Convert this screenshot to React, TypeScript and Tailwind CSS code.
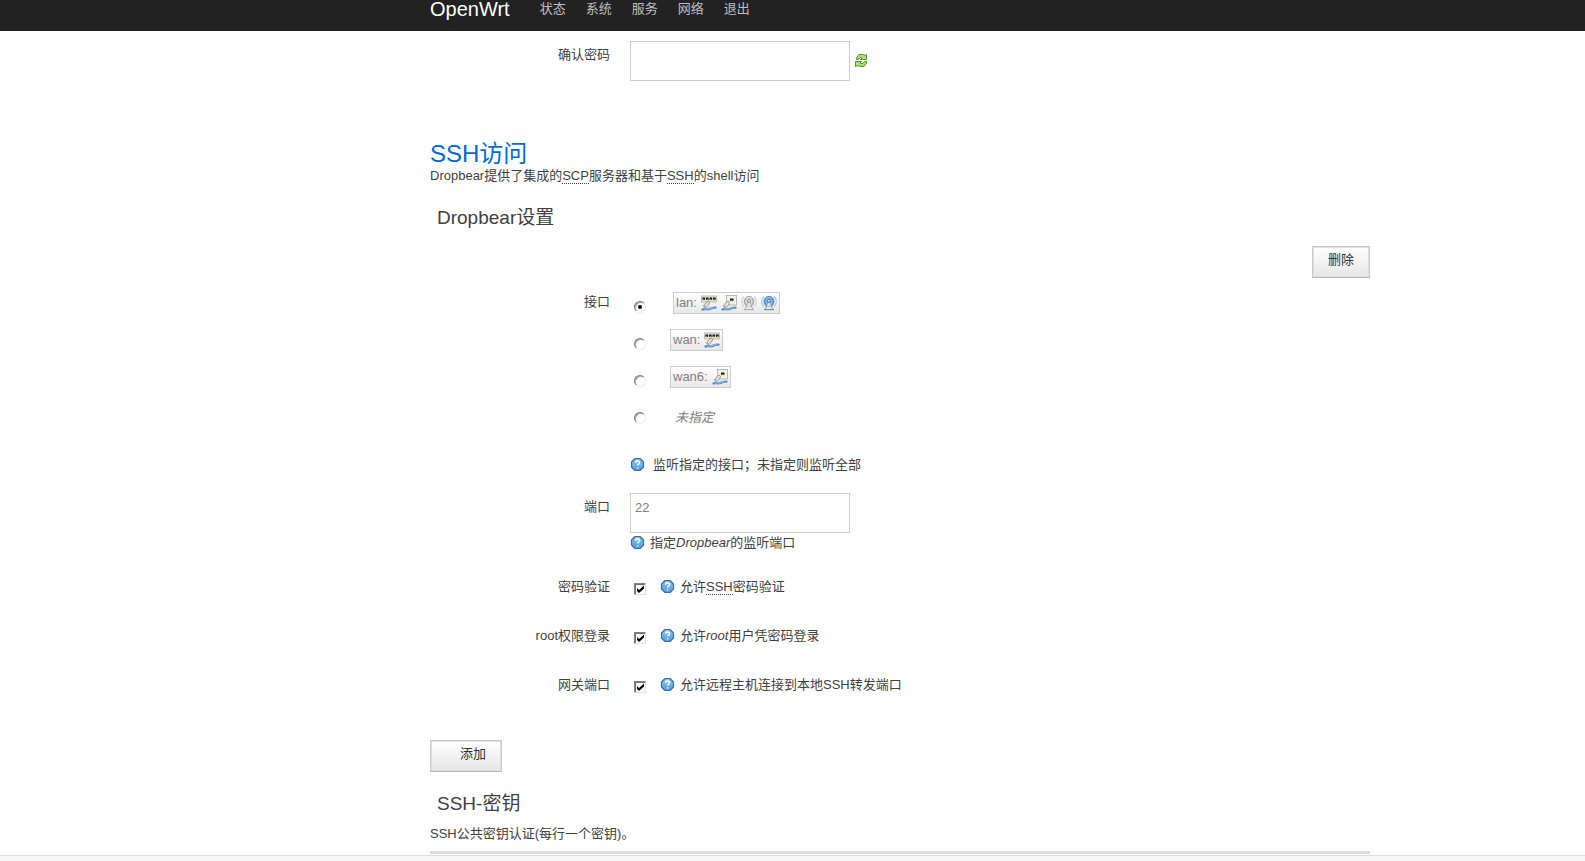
import clsx from "clsx";
import { FC, ReactNode, useState } from "react";

const NAV_ITEMS = ["状态", "系统", "服务", "网络", "退出"];

type DeviceType = "switch" | "ethernet" | "wifi-off" | "wifi";

const INTERFACES: { name: string; devices: DeviceType[] }[] = [
  { name: "lan", devices: ["switch", "ethernet", "wifi-off", "wifi"] },
  { name: "wan", devices: ["switch"] },
  { name: "wan6", devices: ["ethernet"] },
];

const Cable = () => (
  <>
    <path
      d="M1.500 14.500c2-1.200 4 .2 6-.3s3-1.800 7-1.600"
      fill="none"
      stroke="#5f8fcb"
      strokeWidth="2.400"
      strokeLinecap="round"
    />
    <path
      d="M3 14c2-.6 3.500.2 5-.3s2.500-1.100 4.500-1"
      fill="none"
      stroke="#a9c8ec"
      strokeWidth=".8"
    />
    <path d="M5 7.500l2-1.500 1.500 1-.8 3L5 12.500 2.800 11z" fill="#e2e2de" stroke="#8f8f8a" strokeWidth=".9" />
    <path d="M2 10.500l2.500 2.500" stroke="#999" strokeWidth="1" />
  </>
);

const Waves: FC<{ off?: boolean }> = ({ off }) => {
  const dark = off ? "#a8a8a8" : "#4f8bd0";
  const light = off ? "#d0d0d0" : "#a3c6ee";

  return (
    <>
      <circle cx="8" cy="6.500" r="5.500" fill={off ? "#dcdcdc" : "#8ab8ea"} />
      <g fill="none" strokeLinecap="round">
        <path d="M2.500 11a7 7 0 0 1 0-9M13.500 11a7 7 0 0 0 0-9" stroke={light} strokeWidth="1.400" />
        <path d="M4.800 9.500a4.600 4.600 0 0 1 0-6M11.200 9.500a4.600 4.600 0 0 0 0-6" stroke={dark} strokeWidth="1.400" />
        <path d="M5.500 2a4.500 4.500 0 0 1 5 0" stroke={dark} strokeWidth="1" />
        <path d="M7.500 6.500L4.500 13.500M8.500 6.500l3 7M6 11h4" stroke={off ? "#8e8e8e" : "#6c7f94"} strokeWidth=".9" />
      </g>
      <path d="M7 7.500h2l1.200 4H5.800z" fill={off ? "#e6e6e6" : "#d5e3f3"} />
      <circle cx="8" cy="5.800" r="1.500" fill="#f4f4f4" stroke={off ? "#777" : "#2c5f9e"} strokeWidth=".9" />
      <path d="M3 14.500h10" stroke={off ? "#b0b0b0" : "#8a8a8a"} strokeWidth="1.400" />
      <path d="M4.500 13.300h7" stroke="#ececec" strokeWidth="1" />
    </>
  );
};

const DeviceIcon: FC<{ type: DeviceType }> = ({ type }) => (
  <svg viewBox="0 0 16 16" className="size-4 shrink-0" aria-hidden="true">
    {type === "switch" && (
      <>
        <rect x=".5" y="1" width="15" height="6" fill="#e6e4da" stroke="#b4b2a8" strokeWidth=".8" />
        {[1.5, 5, 8.5, 12].map((x) => (
          <g key={x}>
            <rect x={x} y="2.500" width="2.600" height="2.500" fill="#1c1c14" />
            <rect x={x + 0.6} y="4.200" width="1.400" height="1.200" fill="#c2ac3c" />
          </g>
        ))}
        <Cable />
      </>
    )}
    {type === "ethernet" && (
      <>
        <rect x="5.500" y=".5" width="10" height="9.500" fill="#f2f1ea" stroke="#b4b2a8" strokeWidth=".9" />
        <rect x="9" y="3.500" width="3.500" height="2.500" fill="#1c1c14" />
        <rect x="9.800" y="5.200" width="1.900" height="1.200" fill="#c2ac3c" />
        <Cable />
      </>
    )}
    {type === "wifi-off" && <Waves off />}
    {type === "wifi" && <Waves />}
  </svg>
);

const HelpIcon = () => (
  <svg viewBox="0 0 16 16" className="size-4 shrink-0" aria-hidden="true">
    <defs>
      <linearGradient id="help-fill" x1="0" y1="0" x2="0" y2="1">
        <stop offset="0" stopColor="#8cc4f0" />
        <stop offset="1" stopColor="#4d9fe6" />
      </linearGradient>
    </defs>
    <path
      d="M5 1.500h5l3.500 3.500v5L10 13.500H5L1.500 10V5z"
      fill="url(#help-fill)"
      stroke="#3f6d99"
      strokeWidth="1.200"
      strokeLinejoin="round"
    />
    <path
      d="M5.700 5.700c0-2.200 3.800-2.200 3.800 0 0 1.400-1.900 1.400-1.900 2.700M7.600 10.200v1.400"
      fill="none"
      stroke="#fff"
      strokeWidth="1.400"
    />
  </svg>
);

const ReloadIcon = () => (
  <svg viewBox="0 0 16 16" className="size-4" aria-hidden="true">
    <g fill="#a9e07a" stroke="#55952a" strokeWidth="1" strokeLinejoin="round">
      <path d="M2.500 6.500V5L5 1.500h4.500l1.500 1 1.500-1v5h-6L8 5 6.500 4.500 4 6.500z" />
      <path d="M12.500 8.500V10L10 13.500H5.500l-1.500-1-2.500 1v-5h6L6 10l2 .8 3-2.300z" />
    </g>
  </svg>
);

const Row: FC<{ label: string; htmlFor?: string; className?: string; labelClass?: string; children: ReactNode }> = ({
  label,
  htmlFor,
  className,
  labelClass,
  children,
}) => (
  <div className={clsx("flex gap-5", className)}>
    <label htmlFor={htmlFor} className={clsx("w-[180px] shrink-0 text-right", labelClass)}>
      {label}
    </label>
    <div className="min-w-0 flex-1">{children}</div>
  </div>
);

const Radio: FC<{ id: string; checked: boolean; onChange: () => void }> = ({ id, checked, onChange }) => (
  <span className="relative mt-2 ml-1 size-3 shrink-0">
    <input
      type="radio"
      name="interface"
      id={id}
      checked={checked}
      onChange={onChange}
      className="peer block size-3 appearance-none rounded-full border border-t-[#7a7a7a] border-r-[#ececec] border-b-[#ececec] border-l-[#7a7a7a] bg-white shadow-[inset_1px_1px_0_#a8a8a8]"
    />
    <span className="pointer-events-none absolute top-1 left-1 hidden size-1 rounded-full bg-black peer-checked:block" />
  </span>
);

const CheckRow: FC<{ id: string; label: string; className?: string; children: ReactNode }> = ({
  id,
  label,
  className,
  children,
}) => {
  const [checked, setChecked] = useState(true);

  return (
    <Row label={label} htmlFor={id} className={className}>
      <div className="flex items-center">
        <span className="relative mt-1 ml-1 size-3 shrink-0">
          <input
            type="checkbox"
            id={id}
            checked={checked}
            onChange={(e) => setChecked(e.target.checked)}
            className="peer block size-3 appearance-none border border-t-[#808080] border-r-[#e0e0e0] border-b-[#e0e0e0] border-l-[#808080] bg-white shadow-[inset_1px_1px_0_#707070]"
          />
          <svg
            viewBox="0 0 12 12"
            className="pointer-events-none absolute inset-0 hidden size-3 peer-checked:block"
            aria-hidden="true"
          >
            <path d="M3 5l2 2 5-4.500v3L5 10 3 8z" fill="#000" />
          </svg>
        </span>
        <span className="ml-3.5 flex items-center gap-1">
          <HelpIcon />
          <span>{children}</span>
        </span>
      </div>
    </Row>
  );
};

const Abbr: FC<{ title: string; children: ReactNode }> = ({ title, children }) => (
  <abbr title={title} className="border-b border-dotted border-[#404040] no-underline">
    {children}
  </abbr>
);

const inputClass =
  "block h-10 w-[220px] border border-[#ccc] bg-white px-1 pb-3 text-[13px] text-[#808080] outline-none";
const buttonClass =
  "h-8 border border-[#c8c8c8] border-b-[#b8b8b8] bg-linear-to-b from-white to-[#e6e6e6] pr-[15px] pb-1 text-[13px] leading-5 text-[#333] shadow-[inset_0_0_0_1px_#e0e0e0]";

const App = () => {
  const [selected, setSelected] = useState("lan");
  const [port, setPort] = useState("22");
  const [password, setPassword] = useState("");
  const [visible, setVisible] = useState(false);

  return (
    <div className="flex min-h-screen flex-col bg-white font-['Liberation_Sans','Noto_Sans_CJK_SC',sans-serif] text-[13px] leading-5 text-[#404040]">
      <header className="grid h-[31px] grid-cols-[2fr_minmax(0,940px)_1fr] bg-[#222]">
        <div className="col-start-2 flex h-[18px] items-center">
          <a href="#" className="text-xl leading-5 text-white">
            OpenWrt
          </a>
          <nav className="ml-[30px] flex gap-5 text-[#bfbfbf]">
            {NAV_ITEMS.map((item) => (
              <a key={item} href="#">
                {item}
              </a>
            ))}
          </nav>
        </div>
      </header>

      <div className="grid grid-cols-[2fr_minmax(0,940px)_1fr]">
        <main className="col-start-2">
          <Row label="确认密码" htmlFor="confirm" className="mt-2.5" labelClass="pt-1">
            <div className="flex items-center gap-1">
              <input
                id="confirm"
                type={visible ? "text" : "password"}
                value={password}
                onChange={(e) => setPassword(e.target.value)}
                className={inputClass}
              />
              <button type="button" aria-label="显示/隐藏密码" onClick={() => setVisible(!visible)}>
                <ReloadIcon />
              </button>
            </div>
          </Row>

          <h2 className="mt-[61px] text-2xl leading-6 text-[#0069d6]">SSH访问</h2>
          <p>
            Dropbear提供了集成的<Abbr title="Secure Copy">SCP</Abbr>服务器和基于
            <Abbr title="Secure Shell">SSH</Abbr>的shell访问
          </p>

          <h3 className="mt-5 pl-[7px] text-[19px] leading-6">Dropbear设置</h3>
          <div className="mt-4 flex justify-end">
            <button type="button" className={clsx(buttonClass, "pl-[15px]")}>
              删除
            </button>
          </div>

          <Row label="接口" className="mt-1.5" labelClass="pt-2">
            {INTERFACES.map(({ name, devices }) => (
              <div key={name} className="flex h-[37px] items-center">
                <Radio id={`if-${name}`} checked={selected === name} onChange={() => setSelected(name)} />
                <label
                  htmlFor={`if-${name}`}
                  className={clsx(
                    "flex h-[22px] items-center gap-1 border border-[#ccc] bg-linear-to-b from-white to-[#e8e8e8] px-0.5 text-[#808080]",
                    name === "lan" ? "ml-[27px]" : "ml-6"
                  )}
                >
                  <span>{name}:</span>
                  {devices.map((device) => (
                    <DeviceIcon key={device} type={device} />
                  ))}
                </label>
              </div>
            ))}
            <div className="flex h-[37px] items-center">
              <Radio id="if-none" checked={selected === ""} onChange={() => setSelected("")} />
              <label htmlFor="if-none" className="mt-2 ml-[29px] text-[#808080] italic">
                未指定
              </label>
            </div>
            <div className="mt-[23px] flex items-center gap-[7px]">
              <HelpIcon />
              <span>监听指定的接口；未指定则监听全部</span>
            </div>
          </Row>

          <Row label="端口" htmlFor="port" className="mt-[18px]" labelClass="pt-1">
            <input
              id="port"
              type="text"
              value={port}
              onChange={(e) => setPort(e.target.value)}
              className={inputClass}
            />
            <div className="flex items-center gap-1">
              <HelpIcon />
              <span>
                指定<em>Dropbear</em>的监听端口
              </span>
            </div>
          </Row>

          <CheckRow id="password-auth" label="密码验证" className="mt-6">
            允许<Abbr title="Secure Shell">SSH</Abbr>密码验证
          </CheckRow>
          <CheckRow id="root-auth" label="root权限登录" className="mt-[29px]">
            允许<em>root</em>用户凭密码登录
          </CheckRow>
          <CheckRow id="gateway-ports" label="网关端口" className="mt-[29px]">
            允许远程主机连接到本地SSH转发端口
          </CheckRow>

          <button type="button" className={clsx(buttonClass, "mt-[45px] block pl-[29px]")}>
            添加
          </button>

          <h3 className="mt-5 pl-[7px] text-[19px] leading-6">SSH-密钥</h3>
          <p className="mt-2">SSH公共密钥认证(每行一个密钥)。</p>
          <div className="mt-[7px] h-[3px] bg-[#ddd]" />
        </main>
      </div>

      <footer className="mt-px flex-1 border-t border-[#ddd] bg-[#f7f7f7]" />
    </div>
  );
};

export default App;
